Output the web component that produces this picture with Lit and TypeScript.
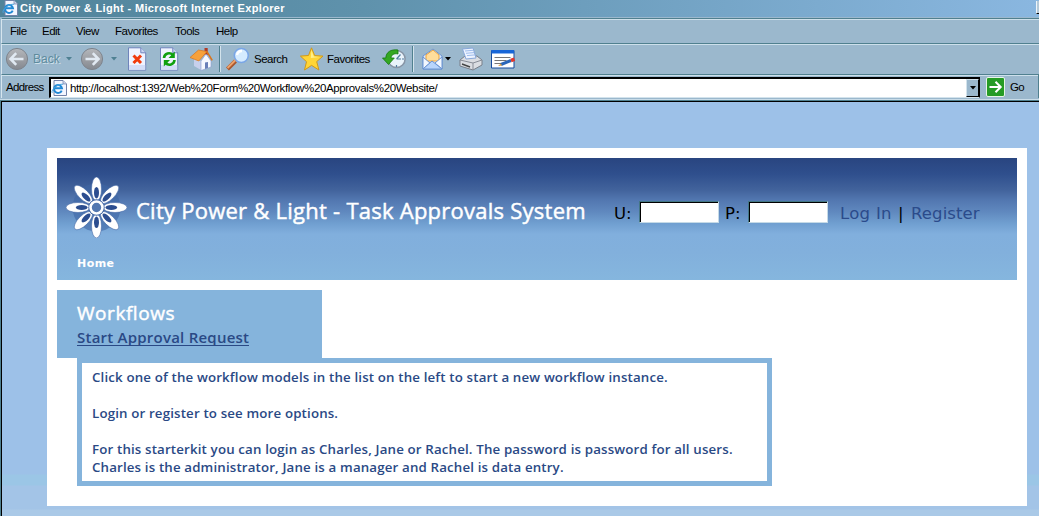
import { LitElement, html, css, svg } from "lit";
import { customElement } from "lit/decorators.js";

const pageGlyph = html`<svg class="fav" viewBox="0 0 16 16">
  <path d="M3 .5h9l3.5 3.5v11.5H3z" fill="#f3f6ff" stroke="#7282a8"/>
  <path d="M12 .5V4h3.5" fill="#cbd6ee" stroke="#7282a8" stroke-width=".7"/>
  <path d="M10.7 10.6A4 4 0 1 1 11 8.3H4" fill="none" stroke="#2188d4" stroke-width="2"/>
  <path d="M1.2 12.8C-.4 10 7 3.4 12 4.3" fill="none" stroke="#48a5e0" stroke-width="1"/>
</svg>`;

const circle = (dir: number) => html`<svg class="ic" viewBox="0 0 24 24">
  <defs><linearGradient id="g" x1="0" y1="0" x2="0" y2="1"><stop offset="0" stop-color="#b5b7bb"/><stop offset="1" stop-color="#84888f"/></linearGradient></defs>
  <circle cx="12" cy="12" r="10.6" fill="url(#g)" stroke="#7e848d" stroke-width="1"/>
  <g transform="translate(12 12) scale(${dir} 1)"><path d="M-6.5 0H6.5M-.8-5.8-6.5 0l5.7 5.8" fill="none" stroke="#e1e9f2" stroke-width="2.6"/></g>
</svg>`;

const sheet = svg`<path d="M2.5.8h12.3l4.9 5v17.4H2.5z" fill="#eff3ff" stroke="#6f84bb"/><path d="M14.8.8v5h4.9" fill="#c9d5f2" stroke="#6f84bb"/><path d="M3 18h16.2v4.7H3z" fill="#d4def8"/>`;
const caret = (color: string) => html`<svg class="caret" viewBox="0 0 6 4"><path d="M0 0h6L3 3.4z" fill="${color}"/></svg>`;

@customElement("app-root")
export class AppRoot extends LitElement {
  static styles = css`
    :host { display: flex; flex-direction: column; width: 1039px; height: 516px; overflow: hidden;
      font-family: "Liberation Sans", sans-serif; background: #9bb8cd; color: #000; box-sizing: border-box; }
    svg { display: block; flex: none; }
    span, a { white-space: nowrap; }
    .title { height: 17px; display: flex; align-items: flex-start; background: linear-gradient(90deg, #50839a, #5f92ac 35%, #8ab7e0);
      color: #fff; font-weight: bold; font-size: 11px; line-height: 16px; padding-left: 2px; }
    .title span { flex: 1; padding-left: 2px; letter-spacing: .35px; }
    .title i { width: 3px; height: 13px; margin-top: 1px; background: #b4c9d8; border-left: 1px solid #eef5f9; border-bottom: 1px solid #000; box-sizing: border-box; }
    .fav { width: 16px; height: 16px; }
    .menu, .tools, .addr { border-top: 1px solid #50808f; box-shadow: inset 0 1px #cde0eb; box-sizing: border-box; display: flex; font-size: 12px; margin-left: 1px; border-left: 1px solid #d6e5ee; }
    .menu { height: 25px; line-height: 24px; padding-left: 8px; margin-top: 1px; font-size: 11.5px; letter-spacing: -.5px; }
    .menu .m0 { width: 32px; } .menu .m1 { width: 34px; } .menu .m2 { width: 39px; }
    .menu .m3 { width: 60px; } .menu .m4 { width: 41px; }
    .tools { height: 32px; align-items: center; padding-left: 3px; }
    .tools > * { flex: none; box-sizing: border-box; }
    .ic { width: 24px; height: 24px; }
    .off { color: #5e8b9d; text-shadow: 1px 1px #cfe0ea; width: 37px; padding-left: 4px; }
    .s6 { width: 6px; } .s5 { width: 5px; } .s7 { width: 7px; } .s8 { width: 8px; } .s9 { width: 9px; }
    .search { width: 50px; padding-left: 4px; font-size: 11.5px; letter-spacing: -.5px; }
    .favs { width: 58px; padding-left: 3px; font-size: 11.5px; letter-spacing: -.5px; }
    .caret { width: 6px; height: 4px; }
    .sep { width: 2px; height: 26px; background: #50808f; border-right: 1px solid #d3e3ec; }
    .addr { height: 24px; align-items: center; padding-left: 4px; font-size: 11.5px; border-right: 1px solid #50808f; }
    .addr .lab { width: 43px; letter-spacing: -.65px; }
    .field { width: 931px; height: 21px; box-sizing: border-box; background: #fff; border: 2px solid #000; border-right-width: 1px; border-bottom: 1px solid #d3e3ec; display: flex; align-items: center; margin-top: 1px; }
    .field span { flex: 1; padding: 0 0 0 3px; letter-spacing: -.36px; }
    .drop { width: 13px; height: 18px; background: #9bb8cd; border: 1px solid #d3e3ec; border-right-color: #000; border-bottom-color: #000; box-sizing: border-box; display: grid; place-items: center; }
    .go { width: 19px; height: 20px; margin-left: 6px; }
    .golab { padding-left: 5px; letter-spacing: -.8px; }
    .view { flex: 1; border-top: 1px solid #c9dce8; margin-top: 1px; box-shadow: inset 0 1px #50808f, inset 1px 0 #50808f; padding-top: 1px; display: flex; }
    .page { flex: 1; border-top: 1px solid #000; border-left: 1px solid #000; margin-left: 1px; background: linear-gradient(#9dc1e8 0 372px, #9bc6e6 373px 383px, #a3c4e7 384px 407px, #aac9e7 408px); padding: 46px 12px 10px 45px; box-sizing: border-box; }
    .card { background: #fff; width: 980px; height: 358px; padding: 10px; box-sizing: border-box; }
    .hero { height: 122px; background: linear-gradient(#294580 0, #2f4f8d 16px, #42639c 32px, #5277b0 42px, #6089bf 54px, #71a0d1 66px, #81afdd 76px, #82b0dc 95px, #85b6de); display: flex; flex-direction: column; }
    .top { height: 90px; display: flex; align-items: flex-start; padding-left: 9px; }
    .logo { width: 61px; height: 61px; margin-top: 19px; }
    h1 { margin: 0 0 0 9px; width: 478px; padding-top: 36px; font: 400 22px/32px "Open Sans", sans-serif; color: #fff; white-space: nowrap; letter-spacing: .25px; -webkit-text-stroke: .45px #fff; }
    .login { display: flex; font: 16.5px/20px "DejaVu Sans", sans-serif; padding-top: 45px; align-items: flex-start; }
    .login > * { flex: none; box-sizing: border-box; }
    .u { width: 25px; } .p { width: 29px; padding-left: 6px; } .in { width: 70px; padding-left: 12px; } .bar { width: 13px; }
    .in { letter-spacing: .3px; }
    .reg { letter-spacing: .1px; }
    .u, .p, .in, .bar, .reg { padding-top: 1px; }
    .box { width: 80px; height: 22px; margin-top: -2px; background: #fff; border: 1px solid #437684; border-right-color: #c5dae7; border-bottom-color: #c5dae7; box-shadow: inset 1px 1px #000; }
    .login a { color: #2b4b8b; }
    .home { padding-left: 20px; font: bold 11px/32px "DejaVu Sans", sans-serif; color: #fff; letter-spacing: .45px; }
    .side { margin-top: 10px; width: 265px; height: 68px; background: #85b4dc; padding: 11px 20px 0; box-sizing: border-box; }
    h2 { margin: 0; font: 400 19px/25px "Open Sans", sans-serif; color: #fff; letter-spacing: .55px; -webkit-text-stroke: .45px #fff; }
    .side a { display: inline-block; font: 600 15px/22px "Open Sans", sans-serif; color: #2a4985; border-bottom: 1px solid #2a4985; height: 19px; letter-spacing: .23px; }
    .info { margin-left: 20px; width: 695px; height: 128px; border: 5px solid #85b4dc; box-sizing: border-box; padding: 5px 10px; font: 600 13.3px/18px "Open Sans", sans-serif; color: #2a4985; white-space: nowrap; letter-spacing: .15px; }
    .info p { margin: 0 0 18px; }
  `;

  render() {
    const angles = [45, 135, 225, 315, 0, 90, 180, 270];
    const petal = (a: number) => svg`<g transform="rotate(${a})"><ellipse cy="-18.5" rx="5" ry="12" fill="#fff" stroke="#4468a6" stroke-width=".6"/><ellipse cy="-14.8" rx="2.5" ry="5.8" fill="#2c4d8f"/></g>`;
    return html`
      <div class="title">${pageGlyph}<span>City Power &amp; Light - Microsoft Internet Explorer</span><i></i></div>
      <div class="menu">${["File", "Edit", "View", "Favorites", "Tools", "Help"].map((t, i) => html`<span class="m${i}">${t}</span>`)}</div>
      <div class="tools">
        ${circle(1)}<span class="off">Back</span>${caret("#4f8092")}
        <span class="s8"></span>${circle(-1)}<span class="s7"></span>${caret("#4f8092")}<span class="s9"></span>
        <svg class="ic" viewBox="0 0 24 24">${sheet}<path d="m7.5 8.5 7.5 7.5m0-7.5L7.5 16" stroke="#f13a0c" stroke-width="3"/></svg>
        <span class="s8"></span>
        <svg class="ic" viewBox="0 0 24 24">${sheet}<path d="M6 11c.4-5 6-6 9-3M16.5 13c-.4 5-6 6-9 3" fill="none" stroke="#10a010" stroke-width="2.6"/><path d="M16.8 4.5V11h-6.3zM5.8 19.5V13H12z" fill="#10a010"/></svg>
        <span class="s7"></span>
        <svg class="ic" viewBox="0 0 24 24"><path d="M15.5 1h3.2v7h-3.2z" fill="#b13a25"/><path d="M5 12v7l7 4v-9z" fill="#c7d0ec"/><path d="m12 14 5-7 5 7v6l-10 3.5z" fill="#f6f8ff" stroke="#8a9bd0" stroke-width=".6"/><path d="M16 15.5 19 15v6l-3 1z" fill="#6a7fb8"/><path d="M1 10.5 9.5 3 18 4.5 9.8 14z" fill="#f7a13b" stroke="#d9741b" stroke-width=".7"/><path d="m17.8 4.3 5.4 9" stroke="#d9741b" stroke-width="1.6"/></svg>
        <span class="s6"></span><div class="sep"></div><span class="s5"></span>
        <svg class="ic" viewBox="0 0 24 24"><path d="m1.5 22 8-8" stroke="#a8542c" stroke-width="4"/><path d="m1.5 21 8-8" stroke="#eba16b" stroke-width="2"/><circle cx="15.3" cy="8.5" r="7" fill="#d5ebff" stroke="#7aa6e6" stroke-width="1.6"/><path d="M11 8a5 5 0 0 1 5-4" fill="none" stroke="#fff" stroke-width="2.4"/></svg>
        <span class="search">Search</span>
        <svg class="ic" viewBox="0 0 24 24"><path d="m11.5.8 3.2 7.8 8.3.5-6.3 5.5 2.2 8.4-7.3-4.6-7.1 4.6 2-8.3L.4 9.1l8.1-.6z" fill="#ffd536" stroke="#cf981b"/><path d="m11.4 3 2.4 6.5 6 .5-9 1z" fill="#fff08b"/></svg>
        <span class="favs">Favorites</span>
        <svg class="ic" viewBox="0 0 24 24"><circle cx="14.5" cy="12" r="8.6" fill="#e9f3fb" stroke="#8795a6" stroke-width="1.5"/><path d="m14.5 12 4-4.5M14.5 12H19m-4.5 6v2M22 12h-2" stroke="#507ca0" stroke-width="1.2" fill="none"/><path d="M16 3C9 2 4 5 3.8 11H.5l6 6.5 5.8-6.5H9c0-3 3-5 7-4z" fill="#34a822" stroke="#147710" stroke-width=".8"/></svg>
        <span class="s6"></span><div class="sep"></div><span class="s7"></span>
        <svg class="ic" viewBox="0 0 24 24"><path d="m2 9 10-7 9 7v13H2z" fill="#dceafe" stroke="#6b94d1"/><path d="m5 8 7-5 6 5v6H5z" fill="#ffdd9b" stroke="#eba33e"/><path d="m2 10 7 6-7 6V10m19 0-7 6 7 6V10" fill="#f3f8ff" stroke="#6b94d1"/><path d="m2 22 9-8 10 8z" fill="#b8d5fc" stroke="#6b94d1"/></svg>
        ${caret("#000")}<span class="s8"></span>
        <svg class="ic" viewBox="0 0 24 24"><path d="m1 13 5-4h12l5 4v5l-9 5L1 19z" fill="#dadde2" stroke="#787e89"/><path d="M7 12 3.5 2 14 1l3 10z" fill="#edf3ff" stroke="#88a8da"/><path d="m6 4 8-.7m-7 3 8-.7m-7 3 8-.7" stroke="#9dbcec"/><path d="m1 13 13 3 9-3M14 16v7" fill="none" stroke="#888d97"/><path d="m3 17 8 3" stroke="#444" stroke-width="1.5"/></svg>
        <span class="s8"></span>
        <svg class="ic" viewBox="0 0 24 24"><path d="M.5 3.5H23V21H.5z" fill="#fff" stroke="#174ca1"/><path d="M.5 3H23v3.5H.5z" fill="#1766d8"/><path d="M3.5 10.5h16m-16 3h12m-12 3h7" stroke="#777" stroke-width="1"/><path d="m10 17.5 10-4" stroke="#2a66b8" stroke-width="3"/><path d="m20 13.5 3.5-1.3" stroke="#e2362a" stroke-width="3.5"/><path d="m7 19 3-2.5 1 2z" fill="#d99a3c"/></svg>
      </div>
      <div class="addr"><span class="lab">Address</span>
        <div class="field">${pageGlyph}<span>http://localhost:1392/Web%20Form%20Workflow%20Approvals%20Website/</span><div class="drop">${caret("#000")}</div></div>
        <svg class="go" viewBox="0 0 19 20"><rect x=".5" y=".5" width="18" height="19" rx="1.5" fill="#259b25" stroke="#e6f4e6"/><path d="M3.5 10h11M9.5 4.8l5.2 5.2-5.2 5.2" fill="none" stroke="#fff" stroke-width="2"/></svg>
        <span class="golab">Go</span>
      </div>
      <div class="view"><div class="page"><div class="card">
        <div class="hero">
          <div class="top">
            <svg class="logo" viewBox="-30.5 -30.5 61 61"><circle r="24" fill="#3e65a5" opacity=".6"/>${angles.map(petal)}<circle r="8.2" fill="#3c62a2"/><circle r="6" fill="#5277b0" stroke="#fff" stroke-width="2.6"/></svg>
            <h1>City Power &amp; Light - Task Approvals System</h1>
            <div class="login"><span class="u">U:</span><div class="box"></div><span class="p">P:</span><div class="box"></div><a class="in">Log In</a><span class="bar">|</span><a class="reg">Register</a></div>
          </div>
          <div class="home">Home</div>
        </div>
        <div class="side"><h2>Workflows</h2><a>Start Approval Request</a></div>
        <div class="info"><p>Click one of the workflow models in the list on the left to start a new workflow instance.</p><p>Login or register to see more options.</p><p>For this starterkit you can login as Charles, Jane or Rachel. The password is password for all users.<br>Charles is the administrator, Jane is a manager and Rachel is data entry.</p></div>
      </div></div></div>`;
  }
}
